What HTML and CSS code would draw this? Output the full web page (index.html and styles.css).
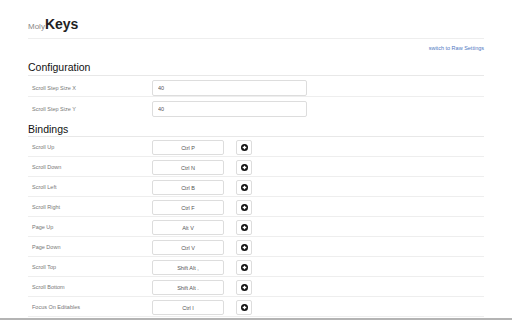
FILE: index.html
```html
<!DOCTYPE html>
<html lang="en">
<head>
    <meta charset="UTF-8">
    <title>MolyKeys</title>
    <link rel="stylesheet" href="styles.css">
</head>
<body>
<div class="page">
    <header class="header">
        <span class="moly">Moly</span><span class="keys">Keys</span>
    </header>
    <div class="raw"><a href="#">switch to Raw Settings</a></div>

    <h2 class="title">Configuration</h2>
    <div class="row conf">
        <div class="label">Scroll Step Size X</div>
        <input class="num" type="text" value="40">
    </div>
    <div class="row conf last">
        <div class="label">Scroll Step Size Y</div>
        <input class="num" type="text" value="40">
    </div>

    <h2 class="title bind-title">Bindings</h2>
    <div id="bindings"></div>
</div>
<div class="bottom-bar"></div>

<script type="text/javascript">
    /*快捷键列表*/
    let bindings = [
        ["Scroll Up", "Ctrl P"],
        ["Scroll Down", "Ctrl N"],
        ["Scroll Left", "Ctrl B"],
        ["Scroll Right", "Ctrl F"],
        ["Page Up", "Alt V"],
        ["Page Down", "Ctrl V"],
        ["Scroll Top", "Shift Alt ,"],
        ["Scroll Bottom", "Shift Alt ."],
        ["Focus On Editables", "Ctrl I"]
    ];
    let plus = '<svg width="7" height="7" viewBox="0 0 10 10"><circle cx="5" cy="5" r="5" fill="#111"/><path d="M5 2.4v5.2M2.4 5h5.2" stroke="#fff" stroke-width="1.8"/></svg>';
    let str = '';
    for (let i in bindings) {
        str += `<div class="row bind">
            <div class="label">${bindings[i][0]}</div>
            <input class="key" type="text" value="${bindings[i][1]}">
            <button class="add">${plus}</button>
        </div>`;
    }
    document.getElementById('bindings').innerHTML = str;
</script>
</body>
</html>
```

FILE: styles.css
```css
*{margin:0;padding:0;box-sizing:border-box}
body{background:#fff;font-family:"Liberation Sans",Arial,sans-serif;color:#555}
.page{width:456px;margin-left:28px}
.header{
    height:39px;
    padding-top:15px;
    border-bottom:1px solid #eee;
    white-space:nowrap;
}
.moly{font-size:8px;color:#888}
.keys{font-size:14px;font-weight:bold;color:#222}
.raw{text-align:right;font-size:5.5px;padding-top:6px;height:21px}
.raw a{color:#4f78c2;text-decoration:none}
.title{
    font-size:10.5px;
    font-weight:normal;
    color:#111;
    height:16px;
    line-height:14px;
    border-bottom:1px solid #e8e8e8;
}
.bind-title{margin-top:4px;height:15px}
.row{
    display:flex;
    align-items:flex-start;
    border-bottom:1px solid #eee;
}
.row.last{border-bottom:none}
.label{
    width:124px;
    padding-left:4px;
    font-size:5.5px;
    color:#777;
}
.conf{height:21px;padding-top:4px}
.conf .label{padding-top:5px}
.bind{height:20px;padding-top:3px}
.bind .label{padding-top:4px}
.num,.key{
    border:1px solid #ddd;
    border-radius:2px;
    background:#fff;
    font-family:inherit;
    font-size:5.5px;
    color:#555;
    outline:none;
}
.num{width:155px;height:16px;padding-left:5px}
.key{width:72px;height:15px;text-align:center}
.add{
    width:16px;
    height:15px;
    margin-left:12px;
    border:1px solid #ddd;
    border-radius:2px;
    background:#fff;
    display:flex;
    align-items:center;
    justify-content:center;
}
.add svg{display:block}
.bottom-bar{position:fixed;left:0;right:0;bottom:0;height:2px;background:#b4b4b4}
```
